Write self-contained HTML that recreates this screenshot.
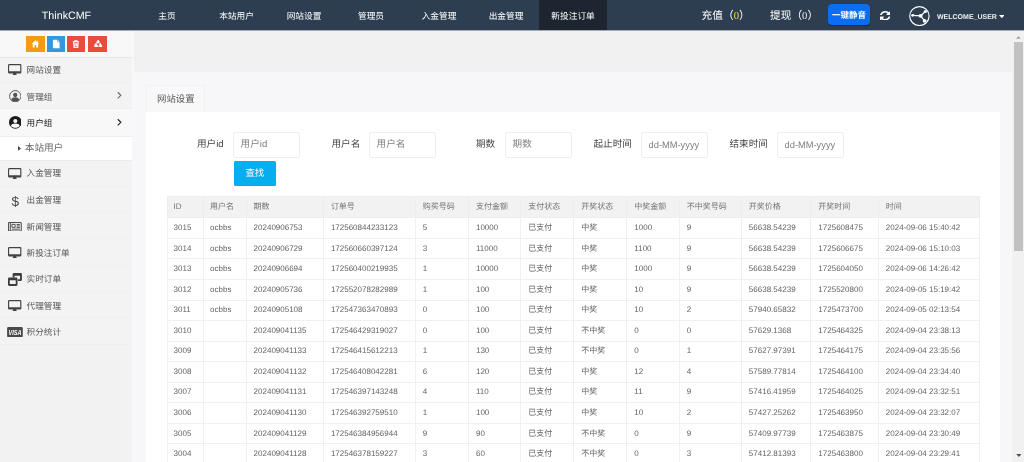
<!DOCTYPE html>
<html lang="zh-CN"><head><meta charset="utf-8"><title>ThinkCMF</title>
<style>
*{box-sizing:border-box;margin:0;padding:0}
html,body{width:1024px;height:462px;overflow:hidden;background:#f1f1f1;font-family:"Liberation Sans","Noto Sans CJK SC",sans-serif;text-rendering:geometricPrecision;-webkit-font-smoothing:antialiased}
.abs{position:absolute}
#root{position:absolute;left:0;top:0;width:1024px;height:462px;overflow:hidden;will-change:transform}
#hdr{position:absolute;left:0;top:0;width:1024px;height:31px;background:#2c3e50;color:#fff;border-bottom:1px solid #a3abb4}
#hdr .brand{position:absolute;left:0;width:133px;top:0;height:30.700px;line-height:32px;text-align:center;font-size:10.700px;padding-right:0px}
#hdr .nav{position:absolute;top:0;height:30px;line-height:32.400px;font-size:8.700px;text-align:center;white-space:nowrap}
#hdr .nav.act{background:#1c2530}
#hdr .rt{position:absolute;top:0;height:30.700px;line-height:33.600px;font-size:10.700px;white-space:nowrap}
#side{position:absolute;left:0;top:30.700px;width:134.200px;height:432px;background:#f2f2f2;border-right:2px solid #f8f8f8}
#short{height:27.300px;background:#f8f8f8;border-bottom:1px solid #e8e8e8;position:relative}
#short i{position:absolute;top:5.300px;height:16px;display:block}
.mi{position:relative;height:26.350px;border-bottom:1px solid #efefef;background:#f3f3f3}
.mi .mt{position:absolute;left:26.600px;top:0;line-height:27.600px;font-size:8.600px;color:#565656}
.mi.dark{background:#f8f8f8}
.mi.dark .mt{color:#111}
.sub{position:relative;height:24.500px;background:#fff;border-bottom:1px solid #ebebeb}
.sub .st{position:absolute;left:24.800px;top:0;line-height:24.200px;font-size:9.600px;color:#666}
.ic{position:absolute;display:block}
.ar{position:absolute;left:117px;top:8.400px;width:4.600px;height:8.600px}
#band{position:absolute;left:134.200px;top:71.500px;width:877.600px;height:400px;background:#f7f7f9}
#tab{position:absolute;left:146.400px;top:85.300px;width:58.900px;height:27px;background:#f8f8f8;border:1px solid #f1f1f1;border-radius:1.500px 1.500px 0 0;border-bottom:none;font-size:9.400px;color:#555;text-align:center;line-height:26px}
#panel{position:absolute;left:146.400px;top:112.200px;width:853.300px;height:360px;background:#fff}
.lbl{position:absolute;top:132px;line-height:26.200px;font-size:9.600px;color:#444;white-space:nowrap}
.inp{position:absolute;top:132px;height:25.600px;width:67px;border:1px solid #efefef;border-radius:2px;background:#fff;font-size:9.600px;color:#808080;line-height:24px;padding-left:6.600px;white-space:nowrap}
#btn{position:absolute;left:233.800px;top:161.200px;width:42.100px;height:25px;background:#06adef;color:#fff;font-size:9.400px;text-align:center;line-height:24.600px;border-radius:1.500px}
table{position:absolute;left:166.500px;top:195.500px;width:812.500px;border-collapse:collapse;table-layout:fixed;font-size:8px;color:#555}
th{height:21.900px;background:#f2f2f2;font-weight:normal;text-align:left;padding:0 0 1px 6.900px;color:#747474;border:1px solid #ededed;white-space:nowrap;font-size:8px}
td{height:20.550px;padding:0 0 1.200px 6.900px;border:1px solid #f0f0f0;white-space:nowrap;color:#626262}
#sb{position:absolute;left:1013px;top:30.700px;width:11px;height:432px;background:#f1f1f1}
#sb .th{position:absolute;left:1.100px;top:11.300px;width:9px;height:209.200px;background:#c1c1c1}
td:nth-child(-n+2),th:nth-child(-n+2){padding-left:6.100px}
</style></head><body><div id="root">
<div id="band"></div>
<div id="tab">网站设置</div>
<div id="panel"></div>
<div class="lbl" style="left:197px">用户id</div><div class="inp" style="left:233px">用户id</div>
<div class="lbl" style="left:331.500px">用户名</div><div class="inp" style="left:369px">用户名</div>
<div class="lbl" style="left:476px">期数</div><div class="inp" style="left:505px">期数</div>
<div class="lbl" style="left:593.500px">起止时间</div><div class="inp" style="left:641px;font-size:9.300px">dd-MM-yyyy</div>
<div class="lbl" style="left:729.500px">结束时间</div><div class="inp" style="left:777px;font-size:9.300px">dd-MM-yyyy</div>
<div id="btn">查找</div>
<table><thead><tr><th style="width:36.5px">ID</th><th style="width:42.69999999999999px">用户名</th><th style="width:77.30000000000001px">期数</th><th style="width:91.80000000000001px">订单号</th><th style="width:53.30000000000001px">购买号码</th><th style="width:52.39999999999998px">支付金额</th><th style="width:53px">支付状态</th><th style="width:53px">开奖状态</th><th style="width:52.5px">中奖金额</th><th style="width:62.0px">不中奖号码</th><th style="width:69.5px">开奖价格</th><th style="width:67.5px">开奖时间</th><th style="width:101.0px">时间</th></tr></thead><tbody>
<tr><td>3015</td><td>ocbbs</td><td>20240906753</td><td>172560844233123</td><td>5</td><td>10000</td><td>已支付</td><td>中奖</td><td>1000</td><td>9</td><td>56638.54239</td><td>1725608475</td><td>2024-09-06 15:40:42</td></tr>
<tr><td>3014</td><td>ocbbs</td><td>20240906729</td><td>172560660397124</td><td>3</td><td>11000</td><td>已支付</td><td>中奖</td><td>1100</td><td>9</td><td>56638.54239</td><td>1725606675</td><td>2024-09-06 15:10:03</td></tr>
<tr><td>3013</td><td>ocbbs</td><td>20240906694</td><td>172560400219935</td><td>1</td><td>10000</td><td>已支付</td><td>中奖</td><td>1000</td><td>9</td><td>56638.54239</td><td>1725604050</td><td>2024-09-06 14:26:42</td></tr>
<tr><td>3012</td><td>ocbbs</td><td>20240905736</td><td>172552078282989</td><td>1</td><td>100</td><td>已支付</td><td>中奖</td><td>10</td><td>9</td><td>56638.54239</td><td>1725520800</td><td>2024-09-05 15:19:42</td></tr>
<tr><td>3011</td><td>ocbbs</td><td>20240905108</td><td>172547363470893</td><td>0</td><td>100</td><td>已支付</td><td>中奖</td><td>10</td><td>2</td><td>57940.65832</td><td>1725473700</td><td>2024-09-05 02:13:54</td></tr>
<tr><td>3010</td><td></td><td>202409041135</td><td>172546429319027</td><td>0</td><td>100</td><td>已支付</td><td>不中奖</td><td>0</td><td>0</td><td>57629.1368</td><td>1725464325</td><td>2024-09-04 23:38:13</td></tr>
<tr><td>3009</td><td></td><td>202409041133</td><td>172546415612213</td><td>1</td><td>130</td><td>已支付</td><td>不中奖</td><td>0</td><td>1</td><td>57627.97391</td><td>1725464175</td><td>2024-09-04 23:35:56</td></tr>
<tr><td>3008</td><td></td><td>202409041132</td><td>172546408042281</td><td>6</td><td>120</td><td>已支付</td><td>中奖</td><td>12</td><td>4</td><td>57589.77814</td><td>1725464100</td><td>2024-09-04 23:34:40</td></tr>
<tr><td>3007</td><td></td><td>202409041131</td><td>172546397143248</td><td>4</td><td>110</td><td>已支付</td><td>中奖</td><td>11</td><td>9</td><td>57416.41959</td><td>1725464025</td><td>2024-09-04 23:32:51</td></tr>
<tr><td>3006</td><td></td><td>202409041130</td><td>172546392759510</td><td>1</td><td>100</td><td>已支付</td><td>中奖</td><td>10</td><td>2</td><td>57427.25262</td><td>1725463950</td><td>2024-09-04 23:32:07</td></tr>
<tr><td>3005</td><td></td><td>202409041129</td><td>172546384956944</td><td>9</td><td>90</td><td>已支付</td><td>不中奖</td><td>0</td><td>9</td><td>57409.97739</td><td>1725463875</td><td>2024-09-04 23:30:49</td></tr>
<tr><td>3004</td><td></td><td>202409041128</td><td>172546378159227</td><td>3</td><td>60</td><td>已支付</td><td>不中奖</td><td>0</td><td>3</td><td>57412.81393</td><td>1725463800</td><td>2024-09-04 23:29:41</td></tr>
<tr><td>3003</td><td></td><td>202409041127</td><td>172546370253120</td><td>2</td><td>50</td><td>已支付</td><td>中奖</td><td>5</td><td>7</td><td>57401.11203</td><td>1725463725</td><td>2024-09-04 23:28:22</td></tr>
</tbody></table>
<div id="side">
<div id="short">
<i style="left:25.800px;width:18.900px;background:#f39c12"><svg viewBox="0 0 18.900 16" width="18.900" height="16"><path fill="#fff" d="M9.400 4.300L13.200 7.900H12.100V11.400H10.200V9.100H8.600V11.400H6.700V7.900H5.600ZM11.300 4.800h.9v1.900l-.9-.85z"/></svg></i>
<i style="left:47.100px;width:18.300px;background:#3498db"><svg viewBox="0 0 18.300 16" width="18.300" height="16"><path fill="#fff" d="M5.900 3.700h4.300v2.500h2.400v6H5.900zM10.700 3.700l1.900 2H10.700z"/></svg></i>
<i style="left:67.400px;width:17.700px;background:#e74c3c"><svg viewBox="0 0 17.700 16" width="17.700" height="16"><path fill="none" stroke="#fff" stroke-width="1.100" d="M5.800 5.700h6.200M7.800 5.600V4.700h2.200v.9M6.600 5.900l.4 5.500h3.800l.4-5.500M8.100 7.100v3.200M9.700 7.100v3.200"/></svg></i>
<i style="left:87.500px;width:19.600px;background:#e74c3c"><svg viewBox="0 0 19.600 16" width="19.600" height="16"><path fill="none" stroke="#fff" stroke-width="1.900" stroke-linejoin="round" d="M10.100 4.900L13.200 10.100H7Z"/><path fill="none" stroke="#e74c3c" stroke-width=".700" d="M7.300 6.400l2.200 1.300M12.200 5.800l-1.400 2.200M10.700 8.800v2.600"/></svg></i>
</div>
<div class="mi" style="height:25.2px"><svg class="ic" style="left:8.300px;top:6.100px;width:13.4px;height:11.4px" viewBox="0 0 27 23"><path fill="#444" d="M2.5 0h22A2.500 2.500 0 0 1 27 2.500v14A2.500 2.500 0 0 1 24.500 19H16.500c0 1 .6 1.700 1.300 2.500.500.600.200 1.500-.800 1.500H10c-1 0-1.300-.900-.800-1.500.700-.800 1.300-1.500 1.300-2.500H2.500A2.500 2.500 0 0 1 0 16.500v-14A2.500 2.500 0 0 1 2.500 0zM2.300 2.300v12.200h22.400V2.300z"/></svg><span class="mt" style="line-height:25.6px">网站设置</span></div>
<div class="mi" style="height:26.2px"><svg class="ic" style="left:8.700px;top:6.600px;width:12.500px;height:12.500px" viewBox="0 0 26 26"><circle cx="13" cy="13" r="11.800" fill="none" stroke="#555" stroke-width="2"/><circle cx="13" cy="10.400" r="4.500" fill="#555"/><path fill="#555" d="M4.800 20.300c1-3.800 4.200-5.100 8.200-5.100s7.200 1.300 8.200 5.100c-2 2.800-5 4.200-8.200 4.200s-6.200-1.400-8.200-4.200z"/></svg><span class="mt" style="line-height:28.0px">管理组</span><svg class="ar" style="top:7.800px" viewBox="0 0 6 10"><path fill="none" stroke="#6a6a6a" stroke-width="1.500" d="M1 1l4 4-4 4"/></svg></div>
<div class="mi dark" style="height:27.4px"><svg class="ic" style="left:8.700px;top:6.900px;width:12.700px;height:12.700px" viewBox="0 0 26 26"><circle cx="13" cy="13" r="13" fill="#1c1c1c"/><circle cx="13" cy="10.300" r="4.300" fill="#f4f4f4"/><path fill="#fff" d="M4 20.600c1-3.900 4.500-5.200 9-5.200s8 1.300 9 5.200c-2.200 2.500-5.500 3.700-9 3.700s-6.800-1.200-9-3.700z"/></svg><span class="mt" style="line-height:28.0px">用户组</span><svg class="ar" viewBox="0 0 6 10"><path fill="none" stroke="#222" stroke-width="1.500" d="M1 1l4 4-4 4"/></svg></div>
<div class="sub"><svg class="ic" style="left:17.800px;top:9.300px;width:3px;height:4.800px" viewBox="0 0 3 5.400" preserveAspectRatio="none"><path fill="#444" d="M0 0L3 2.700 0 5.400z"/></svg><span class="st">本站用户</span></div>
<div class="mi" style="height:25.3px"><svg class="ic" style="left:8.300px;top:6.700px;width:13.4px;height:11.4px" viewBox="0 0 27 23"><path fill="#444" d="M2.5 0h22A2.500 2.500 0 0 1 27 2.500v14A2.500 2.500 0 0 1 24.500 19H16.500c0 1 .6 1.700 1.300 2.500.500.600.200 1.500-.800 1.500H10c-1 0-1.300-.900-.800-1.500.700-.800 1.300-1.500 1.300-2.500H2.500A2.500 2.500 0 0 1 0 16.500v-14A2.500 2.500 0 0 1 2.500 0zM2.300 2.300v12.200h22.400V2.300z"/></svg><span class="mt" style="line-height:25.6px">入金管理</span></div>
<div class="mi"><span class="ic" style="left:11.600px;top:5.700px;font:normal 13.500px/19px 'Liberation Sans',sans-serif;color:#444">$</span><span class="mt" style="line-height:27.6px">出金管理</span></div>
<div class="mi"><svg class="ic" style="left:8.200px;top:8.900px;width:13.800px;height:9.600px" viewBox="0 0 28 19.500"><rect x="1.100" y="1.100" width="25.800" height="17.300" rx="1.500" fill="none" stroke="#505050" stroke-width="2.200"/><path fill="none" stroke="#505050" stroke-width="2" d="M4.800 1v17.500M8 4.800h6.500v6H8zM17.500 5h6.500M17.500 8h6.500M17.500 11h6.500M8 14.500h16"/></svg><span class="mt" style="line-height:28.0px">新闻管理</span></div>
<div class="mi"><svg class="ic" style="left:8.300px;top:7.800px;width:13.4px;height:11.4px" viewBox="0 0 27 23"><path fill="#444" d="M2.5 0h22A2.500 2.500 0 0 1 27 2.500v14A2.500 2.500 0 0 1 24.500 19H16.500c0 1 .6 1.700 1.300 2.500.500.600.200 1.500-.800 1.500H10c-1 0-1.300-.900-.800-1.500.700-.800 1.300-1.500 1.300-2.500H2.500A2.500 2.500 0 0 1 0 16.500v-14A2.500 2.500 0 0 1 2.500 0zM2.300 2.300v12.200h22.400V2.300z"/></svg><span class="mt" style="line-height:28.0px">新投注订单</span></div>
<div class="mi"><svg class="ic" style="left:8.100px;top:7.100px;width:13.900px;height:12.900px" viewBox="0 0 27 25"><path fill="#3c3c3c" d="M11.500 0h13A2.500 2.500 0 0 1 27 2.500v10.500a2.500 2.500 0 0 1-2.500 2.500H19.500v-3.600h3.900V5.200H12.600V8.500H9V2.500A2.500 2.500 0 0 1 11.500 0z"/><path fill="#3c3c3c" d="M2.500 8.500h13.500A2.500 2.500 0 0 1 18.500 11v11.500a2.500 2.500 0 0 1-2.500 2.500H2.500A2.500 2.500 0 0 1 0 22.500V11A2.500 2.500 0 0 1 2.500 8.500zM3.500 14.200v7.300h11.500v-7.300z"/></svg><span class="mt" style="line-height:27.6px">实时订单</span></div>
<div class="mi"><svg class="ic" style="left:8.300px;top:7.800px;width:13.4px;height:11.4px" viewBox="0 0 27 23"><path fill="#444" d="M2.5 0h22A2.500 2.500 0 0 1 27 2.500v14A2.500 2.500 0 0 1 24.500 19H16.500c0 1 .6 1.700 1.300 2.500.500.600.200 1.500-.800 1.500H10c-1 0-1.300-.900-.800-1.500.700-.800 1.300-1.500 1.300-2.500H2.500A2.500 2.500 0 0 1 0 16.500v-14A2.500 2.500 0 0 1 2.500 0zM2.300 2.300v12.200h22.400V2.300z"/></svg><span class="mt" style="line-height:28.0px">代理管理</span></div>
<div class="mi"><svg class="ic" style="left:7px;top:8.500px;width:15.900px;height:10.300px" viewBox="0 0 32 21"><rect width="32" height="21" rx="2.500" fill="#4a4a4a"/><text x="16" y="16" font-family="Liberation Sans, sans-serif" font-weight="bold" font-style="italic" font-size="15" fill="#fff" text-anchor="middle" textLength="26.500" lengthAdjust="spacingAndGlyphs">VISA</text></svg><span class="mt" style="line-height:28.0px">积分统计</span></div>
</div>
<div id="hdr">
<div class="brand">ThinkCMF</div>
<div class="nav" style="left:145px;width:44px">主页</div>
<div class="nav" style="left:202px;width:69px">本站用户</div>
<div class="nav" style="left:270px;width:68px">网站设置</div>
<div class="nav" style="left:341px;width:60px">管理员</div>
<div class="nav" style="left:405px;width:68px">入金管理</div>
<div class="nav" style="left:472px;width:68px">出金管理</div>
<div class="nav act" style="left:539.200px;width:67.800px">新投注订单</div>
<div class="rt" style="left:701.600px">充值（<span style="color:#e6e01e;font-family:'Liberation Serif',serif">0</span>）</div>
<div class="rt" style="left:770px">提现（<span style="font-family:'Liberation Serif',serif;color:#e8e8e8">0</span>）</div>
<div class="abs" style="left:827.800px;top:4.400px;width:42.400px;height:20.300px;background:#0c6df2;border-radius:4px;box-shadow:0 .600px 1px rgba(0,0,20,.350);font-size:8.500px;font-weight:bold;line-height:22.800px;text-align:center;color:#fff">一键静音</div>
<svg class="abs" style="left:879.900px;top:10.500px;width:10.400px;height:9.600px" preserveAspectRatio="none" viewBox="0 0 1536 1536"><path fill="#fff" d="M1511 928q0 5-1 7-64 268-268 434.500t-478 166.500q-146 0-282.500-55t-243.500-157l-129 129q-19 19-45 19t-45-19-19-45v-448q0-26 19-45t45-19h448q26 0 45 19t19 45-19 45l-137 137q71 66 161 102t187 36q134 0 250-65t186-179q11-17 53-117 8-23 30-23h192q13 0 22.500 9.500t9.500 22.500zM1536 128v448q0 26-19 45t-45 19h-448q-26 0-45-19t-19-45 19-45l138-138q-148-137-349-137-134 0-250 65t-186 179q-11 17-53 117-8 23-30 23h-199q-13 0-22.500-9.500t-9.500-22.500v-7q65-268 270-434.500t480-166.500q146 0 284 55.500t245 156.500l130-129q19-19 45-19t45 19 19 45z"/></svg>
<svg class="abs" style="left:909.100px;top:5.700px;width:20.800px;height:20.200px" preserveAspectRatio="none" viewBox="0 0 42 42"><circle cx="21" cy="21" r="19.600" fill="none" stroke="#fff" stroke-width="2.300"/><path fill="none" stroke="#fff" stroke-width="2.400" d="M7.500 19.500l16 1M23.500 20.500l9.500-9M23.500 20.500l8 10.500"/><circle cx="7.500" cy="19.500" r="3" fill="#fff"/><circle cx="23.500" cy="20.500" r="4" fill="#fff"/><circle cx="33" cy="11.500" r="3.300" fill="#fff"/><circle cx="31.500" cy="31" r="3.700" fill="#fff"/></svg>
<div class="abs" style="left:937px;top:0;line-height:35.200px;font-size:7px;font-weight:bold;color:#f0f0f0;white-space:nowrap">WELCOME_USER</div>
<svg class="abs" style="left:998.800px;top:14.700px;width:5.600px;height:3.200px" viewBox="0 0 5.600 3.200"><path fill="#fff" d="M0 0h5.600L2.800 3.200z"/></svg>
</div>
<div id="sb"><svg class="abs" style="left:2.800px;top:5.200px;width:4.800px;height:2.900px" viewBox="0 0 6 3.500"><path d="M0 3.500L3 0l3 3.500z" fill="#a3a3a3"/></svg><div class="th"></div><svg class="abs" style="left:2.700px;top:423.300px;width:5.600px;height:3px" viewBox="0 0 6 3.500"><path d="M0 0L3 3.500 6 0z" fill="#505050"/></svg></div>
</div></body></html>
